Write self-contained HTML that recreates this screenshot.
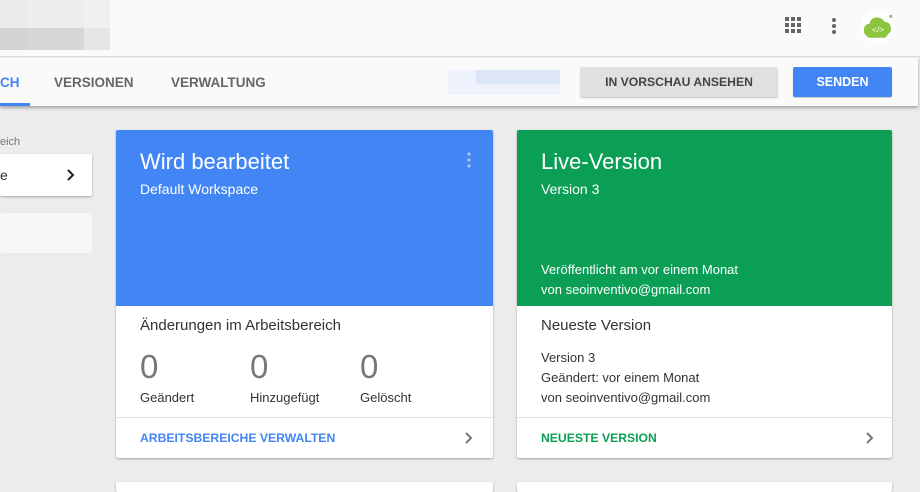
<!DOCTYPE html>
<html><head><meta charset="utf-8"><style>
*{margin:0;padding:0;box-sizing:border-box}
body{width:920px;height:484px;overflow:hidden;background:#ececec;font-family:"Liberation Sans",sans-serif;position:relative}
.abs{position:absolute}
.hdr{left:0;top:0;width:920px;height:57px;background:#fafafa;border-bottom:1px solid #dcdcdc}
.tabs{left:0;top:58px;width:918px;height:48px;background:#fafafa;box-shadow:0 2px 3px rgba(0,0,0,.3)}
.tab{top:75px;font-size:13.5px;color:#666;font-weight:bold;letter-spacing:0}
.card{background:#fff;box-shadow:0 1px 2px rgba(0,0,0,.3);border-radius:2px;overflow:hidden}
.w{color:#fff}
.t{color:#333}
</style></head><body>
<div class="abs hdr"></div>
<div class="abs" style="left:0;top:0;width:28px;height:28px;background:#ebebeb"></div>
<div class="abs" style="left:28px;top:0;width:56px;height:28px;background:#ededed"></div>
<div class="abs" style="left:84px;top:0;width:26px;height:50px;background:#f0f0f0"></div>
<div class="abs" style="left:0;top:28px;width:28px;height:22px;background:#d4d4d4"></div>
<div class="abs" style="left:28px;top:28px;width:56px;height:22px;background:#d6d6d6"></div>
<div class="abs" style="left:84px;top:28px;width:26px;height:22px;background:#e6e6e6"></div>
<svg class="abs" style="left:785px;top:17px" width="18" height="18" viewBox="0 0 18 18" fill="#666"><rect x="0" y="0" width="4" height="4"/><rect x="6" y="0" width="4" height="4"/><rect x="12" y="0" width="4" height="4"/><rect x="0" y="6" width="4" height="4"/><rect x="6" y="6" width="4" height="4"/><rect x="12" y="6" width="4" height="4"/><rect x="0" y="12" width="4" height="4"/><rect x="6" y="12" width="4" height="4"/><rect x="12" y="12" width="4" height="4"/></svg>
<svg class="abs" style="left:830px;top:17px" width="8" height="18" fill="#666"><circle cx="4" cy="3" r="2"/><circle cx="4" cy="9" r="2"/><circle cx="4" cy="15" r="2"/></svg>
<div class="abs" style="left:861px;top:10px;width:33px;height:33px;border-radius:50%;background:#fff"></div>
<svg class="abs" style="left:862px;top:12px" width="32" height="28" viewBox="0 0 30 26"><path d="M4 22 Q1 20 2 15 Q3 11 7 11 Q8 5 14 5 Q19 5 21 9 Q26 9 27 14 Q28 18 25 20 L22 24 L6 24Z" fill="#8cc63f"/><text x="15" y="19" font-size="8" fill="#fff" text-anchor="middle" font-family="Liberation Sans">&lt;/&gt;</text><circle cx="27" cy="4" r="1.5" fill="#aaa"/></svg>
<div class="abs tabs"></div>
<div class="abs tab" style="left:0;color:#4285f4">CH</div>
<div class="abs" style="left:0;top:103px;width:30px;height:3px;background:#4285f4"></div>
<div class="abs tab" style="left:54px">VERSIONEN</div>
<div class="abs tab" style="left:171px">VERWALTUNG</div>
<div class="abs" style="left:448px;top:70px;width:112px;height:25px;background:#edf2fc"></div>
<div class="abs" style="left:476px;top:70px;width:84px;height:14px;background:#dce6f8"></div>
<div class="abs" style="left:580px;top:67px;width:198px;height:30px;background:#e0e0e0;border-radius:2px;box-shadow:0 1px 1px rgba(0,0,0,.2);font-size:12.2px;font-weight:bold;color:#444;text-align:center;line-height:30px">IN VORSCHAU ANSEHEN</div>
<div class="abs" style="left:793px;top:67px;width:99px;height:30px;background:#4285f4;border-radius:2px;box-shadow:0 1px 1px rgba(0,0,0,.2);font-size:12.5px;font-weight:bold;color:#fff;text-align:center;line-height:30px">SENDEN</div>
<div class="abs" style="left:0;top:136px;font-size:11px;color:#777">eich</div>
<div class="abs card" style="left:0;top:154px;width:92px;height:42px"><span class="abs t" style="left:0;top:13px;font-size:14px">e</span><svg class="abs" style="left:66px;top:15px" width="10" height="12"><path d="M2 1 L7 6 L2 11" stroke="#222" stroke-width="2" fill="none"/></svg></div>
<div class="abs" style="left:0;top:213px;width:92px;height:40px;background:#f7f7f7;border-radius:2px"></div>

<div class="abs card" style="left:116px;top:130px;width:377px;height:328px">
<div class="abs" style="left:0;top:0;width:377px;height:176px;background:#4285f4"></div>
<div class="abs w" style="left:24px;top:19px;font-size:22px">Wird bearbeitet</div>
<div class="abs w" style="left:24px;top:51px;font-size:14px">Default Workspace</div>
<svg class="abs" style="left:350px;top:22px" width="6" height="18" fill="#aac6f8"><circle cx="3" cy="2" r="1.6"/><circle cx="3" cy="8" r="1.6"/><circle cx="3" cy="14" r="1.6"/></svg>
<div class="abs t" style="left:24px;top:187px;font-size:15px">Änderungen im Arbeitsbereich</div>
<div class="abs" style="left:24px;top:218px;font-size:33px;color:#777">0</div>
<div class="abs" style="left:134px;top:218px;font-size:33px;color:#777">0</div>
<div class="abs" style="left:244px;top:218px;font-size:33px;color:#777">0</div>
<div class="abs t" style="left:24px;top:260px;font-size:13px">Geändert</div>
<div class="abs t" style="left:134px;top:260px;font-size:13px">Hinzugefügt</div>
<div class="abs t" style="left:244px;top:260px;font-size:13px">Gelöscht</div>
<div class="abs" style="left:0;top:287px;width:377px;height:1px;background:#e0e0e0"></div>
<div class="abs" style="left:24px;top:301px;font-size:12.2px;font-weight:bold;color:#4285f4">ARBEITSBEREICHE VERWALTEN</div>
<svg class="abs" style="left:348px;top:301px" width="10" height="14"><path d="M2 2 L7 7 L2 12" stroke="#777" stroke-width="2" fill="none"/></svg>
</div>

<div class="abs card" style="left:517px;top:130px;width:375px;height:328px">
<div class="abs" style="left:0;top:0;width:375px;height:176px;background:#0a9f55"></div>
<div class="abs w" style="left:24px;top:19px;font-size:22px">Live-Version</div>
<div class="abs w" style="left:24px;top:51px;font-size:14px">Version 3</div>
<div class="abs w" style="left:24px;top:132px;font-size:13px">Veröffentlicht am vor einem Monat</div>
<div class="abs w" style="left:24px;top:152px;font-size:13px">von seoinventivo@gmail.com</div>
<div class="abs t" style="left:24px;top:187px;font-size:15px">Neueste Version</div>
<div class="abs t" style="left:24px;top:220px;font-size:13px">Version 3</div>
<div class="abs t" style="left:24px;top:240px;font-size:13px">Geändert: vor einem Monat</div>
<div class="abs t" style="left:24px;top:260px;font-size:13px">von seoinventivo@gmail.com</div>
<div class="abs" style="left:0;top:287px;width:375px;height:1px;background:#e0e0e0"></div>
<div class="abs" style="left:24px;top:301px;font-size:12.2px;font-weight:bold;color:#0a9f55">NEUESTE VERSION</div>
<div class="abs" style="left:348px;top:301px"><svg width="10" height="14"><path d="M2 2 L7 7 L2 12" stroke="#777" stroke-width="2" fill="none"/></svg></div>
</div>
<div class="abs card" style="left:116px;top:482px;width:377px;height:10px"></div>
<div class="abs card" style="left:517px;top:482px;width:375px;height:10px"></div>
</body></html>
